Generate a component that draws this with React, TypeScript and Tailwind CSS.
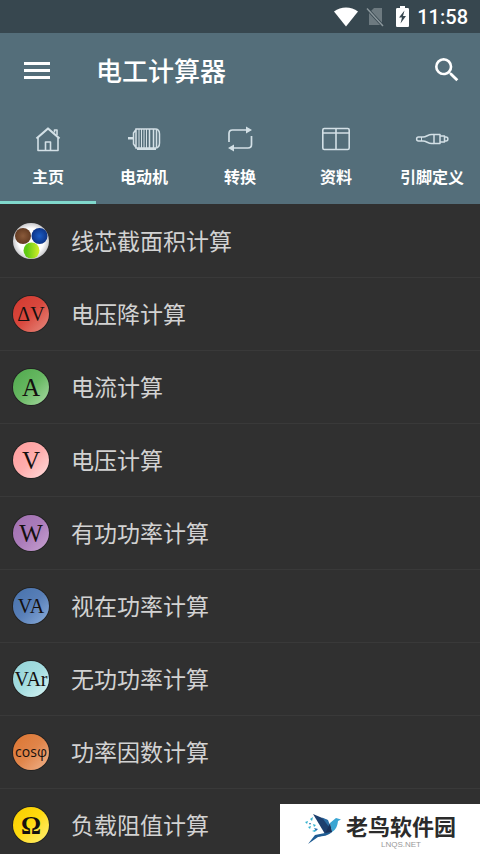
import React, { useState } from 'react';
import { MdSearch } from 'react-icons/md';

interface Tab {
  id: string;
  label: string;
  icon: React.ReactNode;
}

interface Calculator {
  id: string;
  label: string;
  badge: React.ReactNode;
}

const HomeIcon = () => (
  <svg width="26" height="26" viewBox="0 0 26 26" fill="none" stroke="currentColor" strokeWidth="1.6" strokeLinejoin="round">
    <path d="M1.500 12.500 13 2.500l11.500 10" strokeWidth="2.200" />
    <path d="M3 12v12.500h20V12M19.500 6.500V4h2.500v5" />
    <path d="M10.500 24v-8h5v8" />
  </svg>
);

const MotorIcon = () => (
  <svg width="34" height="26" viewBox="0 0 34 26" fill="none" stroke="currentColor" strokeWidth="1.5">
    <path d="M1 11h5v2.500H1z" fill="currentColor" stroke="none" />
    <path d="M9 3.500 6.500 7v11L9 21.500M9 3h19c3.500 0 4.500 2.500 4.500 5v9c0 3-1 5-4.500 5H9z" />
    <path d="M12 3v19M14.500 3v19M17 3v19M19.500 3v19" strokeWidth="1" />
    <path d="M22.500 3v19M26.500 3v19M29.500 4v17" />
    <path d="M10 23h19" strokeWidth="2" />
  </svg>
);

const ConvertIcon = () => (
  <svg width="26" height="26" viewBox="0 0 26 26" fill="none" stroke="currentColor" strokeWidth="1.700">
    <path d="M2 16V7.500C2 5 3.200 4 5.500 4H19M24.500 10v8.500c0 2.500-1.200 3.500-3.500 3.500H6" />
    <path d="M19 .500 25 4l-6 3.500zM7 18.500 1 22l6 3.500z" fill="currentColor" stroke="none" />
  </svg>
);

const TableIcon = () => (
  <svg width="28" height="26" viewBox="0 0 28 26" fill="none" stroke="currentColor" strokeWidth="1.600">
    <rect x="0.800" y="2.500" width="26.400" height="21" rx="1.500" />
    <path d="M1 7h26M14 3v20.500" />
  </svg>
);

const ConnectorIcon = () => (
  <svg width="34" height="26" viewBox="0 0 34 26" fill="none" stroke="currentColor" strokeWidth="1.500" strokeLinejoin="round">
    <path d="M19 8.500h-2.500c-3.500 0-5 2.500-8.500 2.500H3.500c-2.500 0-2.500 4 0 4H8c3.500 0 5 2.500 8.500 2.500H19" />
    <path d="M19 8.500h6v9h-6zM25 10h4.500v6H25M29.500 11h1.500c2.500 0 2.500 4 0 4h-1.500" />
    <path d="M6.500 11v4" strokeWidth="1" />
  </svg>
);

const tabs: Tab[] = [
  { id: 'home', label: '主页', icon: <HomeIcon /> },
  { id: 'motor', label: '电动机', icon: <MotorIcon /> },
  { id: 'convert', label: '转换', icon: <ConvertIcon /> },
  { id: 'resources', label: '资料', icon: <TableIcon /> },
  { id: 'pinouts', label: '引脚定义', icon: <ConnectorIcon /> },
];

const badgeBase =
  "flex h-9 w-9 shrink-0 items-center justify-center rounded-full bg-linear-to-br font-['Liberation_Serif',serif] leading-none text-[#15100f] ring-1 ring-black/30";

const calculators: Calculator[] = [
  {
    id: 'section',
    label: '线芯截面积计算',
    badge: (
      <svg className="h-9 w-9 shrink-0" viewBox="0 0 36 36">
        <defs>
          <radialGradient id="shell">
            <stop offset="0.7" stopColor="#ffffff" />
            <stop offset="1" stopColor="#c9c9cc" />
          </radialGradient>
          <radialGradient id="brown">
            <stop offset="0" stopColor="#8a5a3a" />
            <stop offset="1" stopColor="#633b22" />
          </radialGradient>
          <radialGradient id="blue">
            <stop offset="0" stopColor="#1c5cc4" />
            <stop offset="1" stopColor="#0c3488" />
          </radialGradient>
          <linearGradient id="earth">
            <stop offset="0.2" stopColor="#5fc914" />
            <stop offset="1" stopColor="#d4f02a" />
          </linearGradient>
        </defs>
        <circle cx="18" cy="18" r="18" fill="url(#shell)" />
        <circle cx="10" cy="13" r="8" fill="url(#brown)" />
        <circle cx="26.500" cy="13" r="8" fill="url(#blue)" />
        <circle cx="18.500" cy="27.500" r="8" fill="url(#earth)" />
      </svg>
    ),
  },
  {
    id: 'voltage-drop',
    label: '电压降计算',
    badge: <span className={`${badgeBase} from-[#d2382e] via-[#d9483e] to-[#e58a80] text-xl`}>ΔV</span>,
  },
  {
    id: 'current',
    label: '电流计算',
    badge: <span className={`${badgeBase} from-[#4fa84c] via-[#67b862] to-[#a9dba4] text-[25px]`}>A</span>,
  },
  {
    id: 'voltage',
    label: '电压计算',
    badge: <span className={`${badgeBase} from-[#ff9c9c] via-[#ffadad] to-[#ffdede] text-[25px]`}>V</span>,
  },
  {
    id: 'active-power',
    label: '有功功率计算',
    badge: <span className={`${badgeBase} from-[#a070b0] via-[#ab7cba] to-[#c8a2d2] text-[25px]`}>W</span>,
  },
  {
    id: 'apparent-power',
    label: '视在功率计算',
    badge: <span className={`${badgeBase} from-[#4671ab] via-[#587fb8] to-[#8caedb] text-xl`}>VA</span>,
  },
  {
    id: 'reactive-power',
    label: '无功功率计算',
    badge: <span className={`${badgeBase} from-[#93d3d8] via-[#a4dde0] to-[#d8f4f4] text-xl`}>VAr</span>,
  },
  {
    id: 'power-factor',
    label: '功率因数计算',
    badge: (
      <span className={`${badgeBase} from-[#dd7530] via-[#e0854a] to-[#f0b48c]`}>
        <span className="font-['Open_Sans',sans-serif] text-sm leading-none font-medium">cosφ</span>
      </span>
    ),
  },
  {
    id: 'resistance',
    label: '负载阻值计算',
    badge: <span className={`${badgeBase} from-[#f7cc00] via-[#ffdb0f] to-[#fff06a] text-[25px] font-bold`}>Ω</span>,
  },
];

const StatusBar = () => (
  <div className="flex h-[33px] shrink-0 items-center justify-end bg-[#37474f] pr-3 text-white">
    <svg width="24" height="20" viewBox="0 0 24 20" fill="currentColor">
      <path d="M0 4.500C7 -1 17 -1 24 4.500L12 19.500z" />
    </svg>
    <svg className="ml-2" width="18" height="20" viewBox="0 0 18 20">
      <path d="M8 1h8v17H3V6z" fill="#6d7a80" />
      <path d="M1 1.500 17 19" stroke="#37474f" strokeWidth="3" />
      <path d="M1 1.500 17 19" stroke="#8b979c" strokeWidth="1.500" />
    </svg>
    <svg className="ml-3" width="13" height="21" viewBox="0 0 13 21">
      <path d="M4 0h5v2h2.500c1 0 1.500.5 1.500 1.500v16c0 1-.5 1.500-1.500 1.500h-10C.5 21 0 20.500 0 19.500v-16C0 2.500.500 2 1.500 2H4z" fill="#fff" />
      <path d="M8.500 4.500 3 11.500h3L4.500 17.500l5.500-7.500H7z" fill="#37474f" />
    </svg>
    <span className="ml-2 font-['Roboto',sans-serif] text-xl leading-none font-medium">11:58</span>
  </div>
);

const Watermark = () => (
  <div className="fixed right-0 bottom-0 flex h-[50px] w-[200px] items-center bg-white pl-6">
    <svg width="38" height="32" viewBox="0 0 38 32">
      <path d="M9 1 23 7l5 12-7 2z" fill="#1d3f6e" />
      <path d="M18 4.500 24 7l4 11z" fill="#2b6ca3" />
      <path d="m28 19-2-9 6-5 5 1.500-3 1.500c-.5 5-2 8.500-6 11z" fill="#3aa5d3" />
      <path d="m26 10 2 9-7 2z" fill="#17325c" />
      <path d="M28 19c-4 4-9 4-14 5L4 31l7-9 10-2z" fill="#1f5c93" />
      <path d="m1 9 3-1-1 3zM6 6l3-2-1 4zM4 14l3-1-1 3zM9 11l3 1-2 2zM8 18l5-2-2 3z" fill="#35b3cf" />
      <path d="m10 15 4 1-2 2zM5 10l2 0-1 2z" fill="#2a6fb0" />
    </svg>
    <div className="ml-1 flex flex-col items-center">
      <span className="text-[22px] leading-8 font-bold text-[#2b2b2b]">老鸟软件园</span>
      <span className="font-['Liberation_Sans',sans-serif] text-[8px] leading-2 text-[#999999]">LNQS.NET</span>
    </div>
  </div>
);

export default function App() {
  const [activeTab, setActiveTab] = useState('home');

  return (
    <div className="flex h-screen flex-col overflow-hidden bg-[#303030] font-['Noto_Sans_CJK_SC',sans-serif]">
      <StatusBar />

      <header className="shrink-0 bg-[#546e7a] text-white">
        {/* Toolbar */}
        <div className="flex h-[74px] items-center pr-[17px] pl-6">
          <button aria-label="菜单" className="flex w-[26px] flex-col gap-1">
            <span className="h-[3px] w-full bg-white"></span>
            <span className="h-[3px] w-full bg-white"></span>
            <span className="h-[3px] w-full bg-white"></span>
          </button>
          <h1 className="ml-[46px] flex-1 text-[26px] leading-8 font-medium">电工计算器</h1>
          <button aria-label="搜索">
            <MdSearch size={32} />
          </button>
        </div>

        {/* Tabs */}
        <nav className="grid grid-cols-5">
          {tabs.map((tab) => (
            <button
              key={tab.id}
              onClick={() => setActiveTab(tab.id)}
              className={`flex h-[97px] flex-col items-center border-b-[3px] pt-[19px] ${
                activeTab === tab.id ? 'border-[#80d8cc]' : 'border-transparent'
              }`}
            >
              <span className="text-[#d3e0e6]">{tab.icon}</span>
              <span className="mt-3 text-base leading-6 font-bold">{tab.label}</span>
            </button>
          ))}
        </nav>
      </header>

      {/* Calculator list */}
      <ul className="flex-1 overflow-y-auto pt-px [scrollbar-width:none]">
        {calculators.map((calc) => (
          <li key={calc.id} className="border-b border-[#393939]">
            <button className="flex h-[72px] w-full items-center gap-[22px] px-[13px] text-left">
              {calc.badge}
              <span className="pb-0.5 text-[23px] leading-8 text-[#d2d2d2]">{calc.label}</span>
            </button>
          </li>
        ))}
      </ul>

      <Watermark />
    </div>
  );
}
